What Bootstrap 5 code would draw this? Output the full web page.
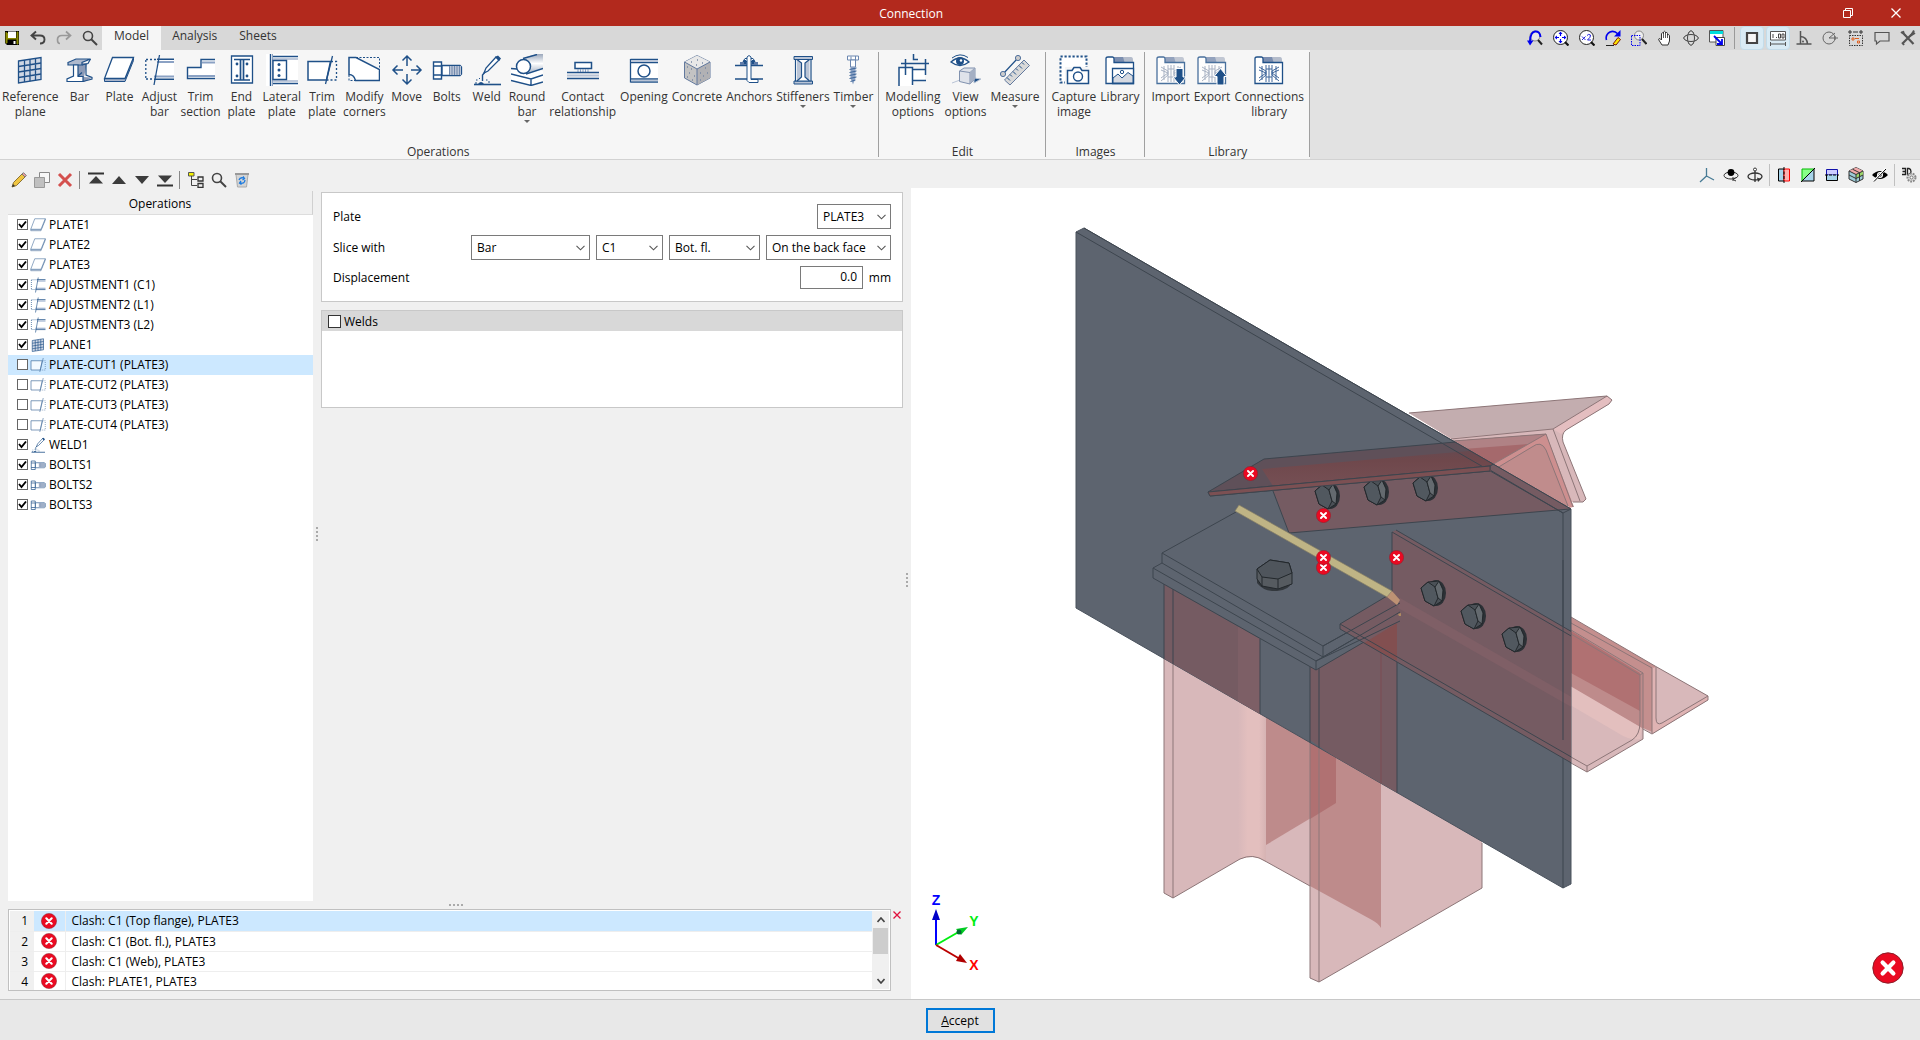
<!DOCTYPE html>
<html lang="en">
<head>
<meta charset="utf-8">
<meta name="viewport" content="width=device-width, initial-scale=1">
<title>Connection</title>
<link rel="stylesheet" href="https://cdn.jsdelivr.net/npm/bootstrap@5.3.0/dist/css/bootstrap.min.css">
<style>
body{font:12px/15px "Open Sans","Noto Sans",sans-serif;color:#000;background:#f0f0f0;height:100vh;min-height:700px;overflow:hidden}
button,input,select{font:inherit;color:inherit}
svg{display:block;flex:none}
.ico{width:16px;height:16px}
.plain-btn{border:0;background:none;padding:0;display:flex;align-items:center;justify-content:center}
.titlebar{background:#b2291d;color:#fff;height:26px;display:grid;grid-template-columns:911fr 1009fr}
.win-btn{width:48px}
.win-title{margin-right:-32px}
.tabs-row{background:#d8d8d8;height:24px}
.quick{width:102px;padding-left:2px;gap:6px}
.quick .plain-btn{width:20px}
.ribbon-tab{border:0;background:none;color:#333;padding:0 11px 5px;height:24px;line-height:19px}
.ribbon-tab.active{background:#f6f6f6;padding:0 12px 5px}
.top-tools{gap:2px}
.top-tools .plain-btn{width:24px;height:24px;border-radius:4px}
.top-tools .on{background:#d9ebf5;border:1px solid #c3dcea}
.top-tools .sep{width:1px;height:22px;background:#999;margin:0 3px}
.ribbon{background:#e2e2e2;height:110px;border-bottom:1px solid #d2d2d2}
.rgroup{background:#f6f6f6;position:relative;height:109px;padding:4px 4px 0;color:#333}
.rgroup::after{content:"";position:absolute;right:0;top:2px;bottom:2px;width:1px;background:#a0a0a0}
.rgroup.first{padding:4px 4px 0 1px}
.rbtn{border:0;background:none;color:#333;padding:0 2px;min-width:40px;text-align:center;display:flex;flex-direction:column;align-items:center;justify-content:flex-start}
.rbtn.snug{padding:0 1px}
.rbtn svg{width:32px;height:32px;margin-bottom:3px}
.caret{width:0;height:0;border:3px solid transparent;border-top-color:#666;border-bottom:0;margin-top:1px}
.rlabel{text-align:center;line-height:14px}
.work{flex:1 1 0;min-height:0;display:grid;grid-template-columns:minmax(0,903fr) 8px minmax(0,1009fr)}
.side{padding:0 0 8px 8px;min-height:0}
.side-tools{height:31px;padding:8px 0 0 1px;gap:3px}
.side-tools .plain-btn{width:20px;height:24px}
.side-tools .sep{width:1px;height:18px;background:#888;margin:0 3px 0 1px}
.upper{min-height:0;flex:1 1 0;display:grid;grid-template-columns:305px 8px minmax(0,1fr)}
.tree{background:#fff}
.tree-head{height:24px;background:#f0f0f0;line-height:25px;text-align:center;border-bottom:1px solid #ddd;border-right:1px solid #d0d0d0}
.trow{height:20px;padding:0 0 1px 9px;display:flex;align-items:center;margin:0;cursor:default}
.trow.sel{background:#cce8ff}
.trow svg{margin:0 3px 0 2px}
.tick{appearance:none;width:11px;height:11px;border:1px solid #666;background:#fff;margin:0;flex:none}
.tick:checked{background:#fff url("data:image/svg+xml,%3Csvg xmlns='http://www.w3.org/2000/svg' viewBox='0 0 9 9'%3E%3Cpath d='M1 4l2.5 3L8 1.5' fill='none' stroke='%23000' stroke-width='1.9'/%3E%3C/svg%3E") center/9px no-repeat}
.tick.big{width:13px;height:13px;border-color:#333}
.box{background:#fff;border:1px solid #c8c8c8}
.form-col{gap:8px;padding-top:1px}
.form-box{padding:11px;height:110px}
.welds-box{height:98px}
.fields{display:flex;flex-direction:column;gap:6px}
.combo{appearance:none;height:25px;border:1px solid #7a7a7a;border-radius:0;padding:0 20px 0 5px;background:#fff url("data:image/svg+xml,%3Csvg xmlns='http://www.w3.org/2000/svg' viewBox='0 0 9 6'%3E%3Cpath d='M.5.8l4 4 4-4' fill='none' stroke='%23555' stroke-width='1.1'/%3E%3C/svg%3E") right 4px center/9px 6px no-repeat}
.w-plate{width:74px}.w-kind{width:119px}.w-name{width:67px}.w-part{width:91px}.w-face{width:125px}
.num{width:63px;height:23px;border:1px solid #7a7a7a;text-align:right;padding:0 5px 2px}
.unit{width:28px;text-align:right}
.welds-head{background:#d8d8d8;height:20px;padding-left:6px;gap:3px}
.grip{display:flex;align-items:center;justify-content:center;gap:2px}
.grip i{width:2px;height:2px;background:#aaa}
.grip.tall{padding-bottom:24px}
.grip.flat{height:8px}
.msgs{height:82px;border:1px solid #c0c0c0;background:#fff;width:calc(100% - 12px);padding:1px}
.msgs table{width:100%;margin:0}
.msgs td{height:20px;padding:0;line-height:19px;border-bottom:1px solid #eee}
.msgs .n{width:24px;background:#f0f0f0;text-align:right;padding-right:6px}
.msgs .ic{width:31px;border-right:1px solid #eee;padding-left:7px}
.msgs .tx{padding-left:6px}
.msgs .sel .ic,.msgs .sel .tx{background:#cce8ff}
.close-list{padding:2px 0 0 2px}
.scroller{width:17px;background:#f0f0f0}
.scroller .plain-btn{width:17px;height:17px}
.thumb{height:26px;width:15px;background:#cdcdcd;margin:0 1px}
.view-tools{height:28px;gap:4px;padding:2px 1px 0 0}
.view-tools .plain-btn{width:20px;height:24px}
.view-tools .sep{width:1px;height:22px;background:#c0c0c0}
.scene{background:#fff;flex:1 1 0;min-height:0}
.scene svg{width:100%;height:100%}
.ln{fill:none;stroke:#3d454e;stroke-width:1;stroke-linejoin:round}
.lo{fill:none;stroke:#8d7678;stroke-width:1;stroke-linejoin:round}
.axis{font:bold 14px "Liberation Sans",sans-serif}
.bottom{height:41px;background:#e8e8e8;border-top:1px solid #c8c8c8;display:flex;justify-content:center;align-items:center}
.accept{width:69px;height:25px;background:#e1e1e1;border:2px solid #0078d7;padding:0;line-height:19px}
</style>
<script src="https://cdn.jsdelivr.net/npm/bootstrap@5.3.0/dist/js/bootstrap.bundle.min.js"></script>
</head>
<body class="d-flex flex-column">

<svg width="0" height="0" class="position-absolute" aria-hidden="true">
<defs>
<linearGradient id="tube" x1="0" y1="0" x2="0" y2="1"><stop offset="0" stop-color="#9aa7bb"/><stop offset=".5" stop-color="#fff"/><stop offset="1" stop-color="#a9b4c6"/></linearGradient>
<!-- Ribbon icons -->
<symbol id="i-plane" viewBox="0 0 32 32"><path d="M4.500 7L27 3.500V25.500L4.500 29Z" fill="#cfd7e4" stroke="#1f5088" stroke-width="1.300"/><path d="M10.500 6V28M16 5.200V27.200M21.500 4.400V26.400M4.500 12.500L27 9M4.500 18L27 14.500M4.500 23.500L27 20" fill="none" stroke="#1f5088" stroke-width="1.300"/></symbol>
<symbol id="i-bar" viewBox="0 0 32 32"><path d="M15 9H24L21 23L29 23.500 21 28 14 24Z" fill="#8d9bb7"/><path d="M5 8.500L13 5H27.500L19 8.500V11H5Z" fill="#aeb9cd" stroke="#1f5088" stroke-width="1.200"/><path d="M10.500 11H15V22.500H20V27.500H4V25L10.500 22Z" fill="#fff" stroke="#1f5088" stroke-width="1.200"/><path d="M19 11L25 9.500 27.500 5M23 10V21L29 23.500V25L20 27.500M15 22L19 18.500" fill="none" stroke="#1f5088" stroke-width="1.200"/></symbol>
<symbol id="i-plate" viewBox="0 0 32 32"><path d="M1.500 24.500V27.500H22L30.500 6.500V3.500L22 24.500Z" fill="#aab6cc" stroke="#1f5088"/><path d="M9.500 3.500H30.500L22 24.500H1.500Z" fill="#fff" stroke="#1f5088" stroke-width="1.300"/></symbol>
<symbol id="i-adjust" viewBox="0 0 32 32"><path d="M15 6H31V24.500H11Z" fill="#fff"/><path d="M14 5.200H31M11 25.200H31" stroke="#1f5088" stroke-width="1.500"/><path d="M14 8H31M11 22.500H31" stroke="#8ba2c4" stroke-width="2"/><path d="M3 5.500H13M2.800 6V25M3 25H10" fill="none" stroke="#1f5088" stroke-width="1.300" stroke-dasharray="2 2"/><path d="M16.500 1L11 31" stroke="#1f5088" stroke-width="1.300"/></symbol>
<symbol id="i-trimsec" viewBox="0 0 32 32"><path d="M16 5H31V25H3V13H16Z" fill="#fff"/><path d="M31 5.500H17V13.500H3.500V24.500H31" fill="none" stroke="#1f5088" stroke-width="1.400"/><path d="M18 8.500H31M4 22H31" stroke="#8ba2c4" stroke-width="2"/></symbol>
<symbol id="i-end" viewBox="0 0 32 32"><path d="M5.500 2H26.500V29H5.500Z" fill="#fff" stroke="#1f5088" stroke-width="1.300"/><path d="M8 5.500H24M8 26H24M14.500 6V26M17.500 6V26" stroke="#1f5088" stroke-width="1.700" fill="none"/><g fill="#1f5088"><circle cx="11" cy="10" r="1.400"/><circle cx="21" cy="10" r="1.400"/><circle cx="11" cy="22" r="1.400"/><circle cx="21" cy="22" r="1.400"/></g></symbol>
<symbol id="i-lateral" viewBox="0 0 32 32"><path d="M0 0H32V32H0Z" fill="#fff"/><path d="M4.500 0V32" stroke="#1f5088" stroke-width="1.400"/><path d="M6.500 0V32" stroke="#8ba2c4"/><path d="M7 2.500H32M7 29.500H32" stroke="#1f5088" stroke-width="1.500"/><path d="M7 5H32M7 27H32" stroke="#a9b8d0" stroke-width="1.500"/><path d="M7 6.500H20.500V25.500H7Z" fill="#fff" stroke="#1f5088" stroke-width="1.400"/><g fill="#1f5088"><circle cx="13" cy="10.500" r="1.500"/><circle cx="13" cy="16" r="1.500"/><circle cx="13" cy="21.500" r="1.500"/></g></symbol>
<symbol id="i-trimpl" viewBox="0 0 32 32"><path d="M2 7.500H24.500L20.500 26H2Z" fill="#fff" stroke="#1f5088" stroke-width="1.500"/><path d="M25 7.500H30.500V26H20" fill="none" stroke="#1f5088" stroke-width="1.300" stroke-dasharray="2 2"/><path d="M26.500 2L19.500 30" stroke="#1f5088" stroke-width="1.300"/></symbol>
<symbol id="i-modify" viewBox="0 0 32 32"><path d="M1 3.500H8L31.500 15.500V26.500H7.500C6.500 22.500 4 20.500 1 20.500Z" fill="#fff" stroke="#1f5088" stroke-width="1.500"/><path d="M8 3.500H31.500V15M1 21V26.500H7" fill="none" stroke="#1f5088" stroke-dasharray="2 1.500"/></symbol>
<symbol id="i-move" viewBox="0 0 32 32"><path d="M16 2V12M16 20V30M2 16H12M20 16H30M11.500 6.500L16 2l4.500 4.500M11.500 25.500L16 30l4.500-4.500M6.500 11.500L2 16l4.500 4.500M25.500 11.500L30 16l-4.500 4.500" fill="none" stroke="#1f5088" stroke-width="1.500"/></symbol>
<symbol id="i-bolt" viewBox="0 0 32 32"><path d="M11 11.500H29L30.500 13V20L29 21.500H11Z" fill="#fff" stroke="#1f5088" stroke-width="1.300"/><path d="M18 12H30V21H18Z" fill="#b9c4d6"/><path d="M18.500 12V21M21 12V21M23.500 12V21M26 12V21M28.500 12V21" stroke="#7088ac"/><path d="M2.500 8H10.500V25H2.500ZM2.500 12H10.500M2.500 21H10.500" fill="#fff" stroke="#1f5088" stroke-width="1.400"/></symbol>
<symbol id="i-weld" viewBox="0 0 32 32"><path d="M3 30.500H30" stroke="#1f5088" stroke-width="1.600"/><path d="M25 3L28 6 17 17 13 19 15 14Z" fill="#fff" stroke="#1f5088" stroke-width="1.300"/><path d="M24 3L27 1.500 30 4.500 28 7Z" fill="#1f5088"/><path d="M14 18L11.500 21V27" stroke="#1f5088" stroke-width="1.400" fill="none"/><path d="M7 30Q10 26 13 30Z" fill="#1f5088"/><path d="M5 26h1.500M8 24.500h1M15 26h1.500M4 29h2M17 28h2" stroke="#1f5088"/></symbol>
<symbol id="i-round" viewBox="0 0 32 32"><path d="M0 16L16 13 32 17V28L20 31 0 27Z" fill="#fff"/><path d="M12 4L26 0H32V14L15 19Z" fill="url(#tube)"/><path d="M12 4.500L26 .5M15 20L32 14.500M0 14.500L6 15M0 20L20 25 32 21M0 26.500L20 31.500 32 28M20 25V31" fill="none" stroke="#1f5088" stroke-width="1.400"/><circle cx="12.500" cy="12.500" r="7" fill="#fff" stroke="#1f5088" stroke-width="1.500"/></symbol>
<symbol id="i-contact" viewBox="0 0 32 32"><path d="M8 8.500H24.500V14.500H8Z" fill="#fff" stroke="#1f5088" stroke-width="1.500"/><path d="M11 15V18M13.500 15V18M16 15V18M18.500 15V18M21 15V18" stroke="#8ba2c4"/><path d="M0 18.500H32M0 24.500H32" stroke="#1f5088" stroke-width="1.300"/><path d="M0 21.500H32" stroke="#b9c4d6" stroke-width="2"/></symbol>
<symbol id="i-opening" viewBox="0 0 32 32"><path d="M2.500 4.500H30V28.500H2.500Z" fill="#fff"/><path d="M2.500 5.500H30M2.500 28H30M2.500 5V28.500M2.500 8.500H30M2.500 25H30" fill="none" stroke="#1f5088" stroke-width="1.300"/><path d="M3 7H30M3 26.500H30" stroke="#b9c4d6" stroke-width="1.600"/><circle cx="16" cy="17" r="6" fill="#fff" stroke="#1f5088" stroke-width="1.500"/></symbol>
<symbol id="i-concrete" viewBox="0 0 32 32"><path d="M16 1.500L29 8V24L16 31 3.500 24V8Z" fill="#c3c3c3" stroke="#62799e"/><path d="M16 1.500L29 8 16 15 3.500 8Z" fill="#e8e8e8"/><path d="M16 15L29 8V24L16 31Z" fill="#b1b1b4"/><path d="M16 15V31M3.500 8L16 15 29 8" fill="none" stroke="#62799e"/><path d="M6 13h1M10 15h1M8 19h1M13 22h1M6 23h1M11 26h1M19 19h1M24 14h1M22 22h1M26 19h1M19 26h1M10 8h1M16 6h1M21 9h1M15 11h1" stroke="#7788a4" stroke-width="1.300"/></symbol>
<symbol id="i-anchors" viewBox="0 0 32 32"><path d="M2 11.500H30M2 25H30" stroke="#1f5088" stroke-width="1.300"/><path d="M7 8H25V11H7Z" fill="#5e7ba8"/><path d="M10 7.500L12 4.500H20L22 7.500Z" fill="#fff" stroke="#1f5088"/><path d="M14 3V26.500L16 28.500H25V25.500H18V3L16 1.500Z" fill="#fff" stroke="#1f5088"/><path d="M12 6V10M20 6V10" stroke="#1f5088" stroke-width="2"/></symbol>
<symbol id="i-stiff" viewBox="0 0 32 32"><path d="M7 2.500H25.500V5.500H7ZM7 27H25.500V30H7Z" fill="#b9c4d6" stroke="#1f5088"/><path d="M8.500 5.500H24V27H8.500Z" fill="#fff" stroke="#1f5088" stroke-width="1.200"/><path d="M10 5.500L14.500 9V23L10 27M22.500 5.500L18 9V23L22.500 27" fill="#b9c4d6" stroke="#1f5088" stroke-width="1.200"/></symbol>
<symbol id="i-timber" viewBox="0 0 32 32"><path d="M10.500 2H21.500V6H10.500ZM14 6V2.500M18.500 2V6" fill="#fff" stroke="#6b87b0"/><path d="M13.500 6H18.500V13H13.500Z" fill="#fff" stroke="#6b87b0"/><path d="M13.500 13H18.500V24L16 30.500 13.500 24Z" fill="#8ba2c4"/><path d="M12.500 15.500L19.500 14M12.500 18.500L19.500 17M12.500 21.500L19.500 20M12.500 24.500L19.500 23M13.500 27.500L18.500 26" stroke="#3f679b"/></symbol>
<symbol id="i-model" viewBox="0 0 32 32"><path d="M2 13H16V32H2Z" fill="#fff"/><path d="M16 15H28V26H16Z" fill="#fff"/><path d="M2 32V13.500H15.500V31M16 15.500H28M16 26.500H29" fill="none" stroke="#1f5088" stroke-width="1.500"/><path d="M4 9.500H32M8.500 5V21M28.500 5V21" stroke="#1f5088" stroke-width="1.500"/><path d="M16.500 0V5.500H21" fill="none" stroke="#1f5088" stroke-width="1.500"/></symbol>
<symbol id="i-view" viewBox="0 0 32 32"><path d="M2 8Q11 0 20 8Q11 15 2 8Z" fill="#fff" stroke="#1f5088" stroke-width="1.300"/><path d="M3 4Q11-2 19 3.500" fill="none" stroke="#1f5088"/><circle cx="11" cy="7" r="4" fill="#1f5088"/><circle cx="12" cy="6.500" r="1.200" fill="#fff"/><path d="M3 29L11 26M25 24L32 25 25 29Z" fill="#1f5088" stroke="#b9c4d6"/><path d="M10.500 17L15 14H26V25L21 30 10.500 27.500Z" fill="#dfe3ea" stroke="#8091ae"/><path d="M10.500 17L21 18.500 26 14M21 18.500V30" fill="none" stroke="#8091ae"/><path d="M21 18.500L26 14V25L21 30Z" fill="#a5b0c4"/></symbol>
<symbol id="i-measure" viewBox="0 0 32 32"><path d="M4 20L18 5" stroke="#1f5088" stroke-width="1.200"/><circle cx="4" cy="20" r="2.600" fill="#ccc" stroke="#51719d"/><circle cx="19" cy="4" r="2.600" fill="#ccc" stroke="#51719d"/><path d="M5.500 26L25 6 30.500 11.500 11 31Z" fill="#d9d9d9" stroke="#62799e"/><path d="M8 23.500l3 3M11 20.500l2 2M14 17.500l3 3M17 14.500l2 2M20 11.500l3 3M23 8.500l2 2" stroke="#1f5088"/></symbol>
<symbol id="i-capture" viewBox="0 0 32 32"><path d="M2.500 2.500H28.500V28.500H2.500Z" fill="#fff" stroke="#1f5088" stroke-width="2" stroke-dasharray="2.200 1.800"/><path d="M7 13H32V32H7Z" fill="#f6f6f6"/><path d="M10 16.500H14L16 13.500H22L24 16.500H30.500V29.500H9.500V16.500Z" fill="#fff" stroke="#1f5088" stroke-width="1.500"/><circle cx="20" cy="22.500" r="4.500" fill="#fff" stroke="#1f5088" stroke-width="1.400"/></symbol>
<symbol id="i-folder" viewBox="0 0 32 32"><path d="M19 3H27Q29 3 29 6V9H19Z" fill="#b4bccb"/><path d="M10 3H19L20.500 8H10Z" fill="#7b8eb0"/><path d="M2 29.500V4.500Q2 3 4 3H8.500Q10 3 10 5V8.500H29.500V29.500Z" fill="#fff" stroke="#1f5088" stroke-width="1.300"/></symbol>
<symbol id="i-library" viewBox="0 0 32 32"><use href="#i-folder"/><path d="M8.500 14.500H29.500V29.500H8.500Z" fill="#fff" stroke="#1f5088" stroke-width="1.300"/><path d="M9 24L14 20 18 24 24 18.500 29 22V29H9Z" fill="#d6dae2" stroke="#1f5088"/><circle cx="18" cy="18" r="1.700" fill="none" stroke="#1f5088"/></symbol>
<symbol id="i-truss" viewBox="0 0 32 32"><path d="M6 13L13 17V21L6 27M26 13L19 17V21L26 27M6 16L13 19 6 24M26 16L19 19 26 24M13 11V28M19 11V28M16 11V28M9 12V26M23 12V26M13 15H19M13 23H19" fill="none" stroke="currentColor"/></symbol>
<symbol id="i-import" viewBox="0 0 32 32"><use href="#i-folder" opacity=".8"/><use href="#i-truss" color="#a9b3c4"/><path d="M21 14.500H28V23H31L24.500 31 18 23H21Z" fill="#1f5088" stroke="#fff"/></symbol>
<symbol id="i-export" viewBox="0 0 32 32"><use href="#i-folder" opacity=".8"/><use href="#i-truss" color="#a9b3c4"/><path d="M21 31H28V22.500H31L24.500 14.500 18 22.500H21Z" fill="#1f5088" stroke="#fff"/></symbol>
<symbol id="i-conn" viewBox="0 0 32 32"><use href="#i-folder"/><use href="#i-truss" color="#3f679b"/></symbol>
<!-- Small icons -->
<symbol id="s-save" viewBox="0 0 16 16"><path d="M1 1H15V15H3L1 13Z" fill="#000"/><path d="M2 2V13H3V9H13V2H14V14H13V9" stroke="#8a8a00" fill="#8a8a00"/><path d="M4 1.500H12V8H4Z" fill="#fff"/><path d="M4 10H12V15H4Z" fill="#000"/><path d="M9.500 11H11.500V14H9.500Z" fill="#fff"/></symbol>
<symbol id="s-undo" viewBox="0 0 16 16"><path d="M6 1.500L1.500 5.500 6 9.500M2 5.500H10Q14.500 5.500 14.500 9.500 14.500 13.500 10 13.500" fill="none" stroke="#444" stroke-width="1.900"/></symbol>
<symbol id="s-redo" viewBox="0 0 16 16"><path d="M10 1.500L14.500 5.500 10 9.500M14 5.500H6Q1.500 5.500 1.500 9.500 1.500 13.500 4 13.500" fill="none" stroke="#999" stroke-width="1.700"/></symbol>
<symbol id="s-find" viewBox="0 0 16 16"><circle cx="6" cy="6" r="4.500" fill="none" stroke="#444" stroke-width="1.600"/><path d="M9 9L15 15" stroke="#444" stroke-width="1.900"/></symbol>
<symbol id="s-lens" viewBox="0 0 16 16"><circle cx="7.500" cy="7.500" r="7" fill="#fff" stroke="#222"/><path d="M12 12L15.500 15.500" stroke="#111" stroke-width="2.200"/></symbol>
<symbol id="s-prev" viewBox="0 0 16 16"><circle cx="8" cy="6" r="5" fill="#e8e8e8" stroke="#888"/><path d="M11 10L15 14.500" stroke="#222" stroke-width="2"/><path d="M13.500 7Q13 1 8 1.500 3.500 2 3 11" fill="none" stroke="#00e" stroke-width="2"/><path d="M0 10.500H6.500L3 15.500Z" fill="#00e"/></symbol>
<symbol id="s-all" viewBox="0 0 16 16"><use href="#s-lens"/><path d="M7.500 3V6M7.500 9V12M3 7.500H6M9 7.500H12" stroke="#00e" stroke-width="1.200"/><path d="M5.500 4L7.500 1.500 9.500 4ZM5.500 11L7.500 13.500 9.500 11ZM4 5.500L1.500 7.500 4 9.500ZM11 5.500L13.500 7.500 11 9.500Z" fill="#00e"/></symbol>
<symbol id="s-x2" viewBox="0 0 16 16"><use href="#s-lens"/><path d="M3 6.500l3.500 3.500M6.500 6.500l-3.500 3.500M8 5.500Q9.500 3.500 11.500 5 12 7 8.500 10H12" fill="none" stroke="#22d"/></symbol>
<symbol id="s-redraw" viewBox="0 0 16 16"><path d="M1.500 10Q0 5 5 2 9 0 13 4" fill="none" stroke="#00e" stroke-width="1.600"/><path d="M15.500 0V6.500H9Z" fill="#00e"/><path d="M1 15.500H9" stroke="#222"/><path d="M8 14L13 7.500 15.500 9.500 11 15Z" fill="#ffe600" stroke="#7a1a00"/></symbol>
<symbol id="s-zwin" viewBox="0 0 16 16"><circle cx="8" cy="5.500" r="4.500" fill="#eee" stroke="#888"/><path d="M11 9L15.500 14" stroke="#222" stroke-width="2"/><path d="M.5 5.500H9V15.500H.5Z" fill="none" stroke="#00e" stroke-dasharray="1.500 1"/></symbol>
<symbol id="s-hand" viewBox="0 0 16 16"><path d="M5 15L1.500 9.500Q1.500 8 3.500 9L4.500 10V3.500Q5.500 2 6.500 3.500V2Q7.500.5 8.500 2V3Q10 1.500 10.500 3.500V5Q12 4 12.500 5.500V11L11 15Z" fill="#fff" stroke="#333"/><path d="M6.500 3V8M8.500 3V8M10.500 4V8" stroke="#333" stroke-width=".8"/></symbol>
<symbol id="s-orbit" viewBox="0 0 16 16"><ellipse cx="8" cy="8" rx="7" ry="3.500" fill="none" stroke="#444"/><ellipse cx="8" cy="8" rx="3.500" ry="7" fill="none" stroke="#444"/><path d="M5.500 3L8 .5 10.500 3M5.500 13L8 15.500 10.500 13M3 5.500L.5 8 3 10.500M13 5.500L15.500 8 13 10.500" fill="#ddd" stroke="#444"/></symbol>
<symbol id="s-win" viewBox="0 0 16 16"><path d="M.5.500H14V12H.5Z" fill="#fff" stroke="#555"/><path d="M1 1H14V4H1Z" fill="#0dd"/><path d="M7 7.500H15.500V15.500H7Z" fill="#fff" stroke="#444"/><path d="M5 6L12 13M13 9V14H8" stroke="#00e" stroke-width="1.800" fill="none"/></symbol>
<symbol id="s-square" viewBox="0 0 16 16"><path d="M3 3H13V13H3Z" fill="#f6f6f6" stroke="#444" stroke-width="2.200"/></symbol>
<symbol id="s-dim" viewBox="0 0 16 16"><path d="M.5 1.500H15.500V10H.5Z" fill="#fff" stroke="#555"/><path d="M3 4V8M6 7.500h1M8.500 4h2v4h-2zM12 4h2v4h-2z" fill="none" stroke="#333" stroke-width=".9"/><path d="M.5 12V16M15.500 12V16M.5 14H15.500" stroke="#555"/></symbol>
<symbol id="s-angle" viewBox="0 0 16 16"><path d="M4.500 1V14M.5 14H15.500M4.500 6.500Q11 7 11.500 14" fill="none" stroke="#555" stroke-width="1.500"/><circle cx="7" cy="11.500" r="1" fill="#555"/></symbol>
<symbol id="s-circ" viewBox="0 0 16 16"><circle cx="7" cy="8" r="6" fill="none" stroke="#666"/><path d="M7 8H16M7 8L13 3M13 6V10" stroke="#666" fill="none"/></symbol>
<symbol id="s-snap" viewBox="0 0 16 16"><path d="M1 1h2v2H1zM5 2h5M12 1h2v2h-2z" fill="none" stroke="#333"/><path d="M1.500 5.500H14.500V15.500H1.500Z" fill="none" stroke="#333" stroke-dasharray="1.500 1"/><path d="M4 8h2v2H4zM7 8.500h4M9.500 11h2v2h-2z" fill="none" stroke="#e06020"/></symbol>
<symbol id="s-chat" viewBox="0 0 16 16"><path d="M1 2.500H15V11H6L2.500 14V11H1Z" fill="none" stroke="#555" stroke-width="1.200"/></symbol>
<symbol id="s-tools" viewBox="0 0 16 16"><path d="M3 13L13 3M4 4L13.500 14" stroke="#555" stroke-width="2.200"/><path d="M1 2L4 4 3 1M15 3L11.500 5 14 .5M2 12.500L4 15" stroke="#555" stroke-width="2" fill="none"/></symbol>
<symbol id="s-pen" viewBox="0 0 16 16"><path d="M1 15L2.500 10.500 11 2 14 5 5.500 13.500Z" fill="#f0c541" stroke="#8c7335"/><path d="M11 2L12.500.7 15.300 3.500 14 5Z" fill="#f4a0a0" stroke="#777"/><path d="M1 15L2 12 4 14Z" fill="#333"/></symbol>
<symbol id="s-copy" viewBox="0 0 16 16"><path d="M5.500.5H15.500V10.500H5.500Z" fill="#f7f7f7" stroke="#888"/><path d="M.5 5.500H10.500V15.500H.5Z" fill="#c0c0c0" stroke="#999"/></symbol>
<symbol id="s-del" viewBox="0 0 16 16"><path d="M2 2L14 14M14 2L2 14" stroke="#d4504e" stroke-width="3"/></symbol>
<symbol id="s-top" viewBox="0 0 16 16"><path d="M0 1.500H16" stroke="#333" stroke-width="2"/><path d="M1 11.500L8 4 15 11.500Z" fill="#3c3c3c"/></symbol>
<symbol id="s-up" viewBox="0 0 16 16"><path d="M1 12L8 4 15 12Z" fill="#3c3c3c"/></symbol>
<symbol id="s-down" viewBox="0 0 16 16"><path d="M1 4L8 12 15 4Z" fill="#3c3c3c"/></symbol>
<symbol id="s-bot" viewBox="0 0 16 16"><path d="M0 13.500H16" stroke="#333" stroke-width="2"/><path d="M1 3.500L8 11 15 3.500Z" fill="#3c3c3c"/></symbol>
<symbol id="s-tree" viewBox="0 0 16 16"><path d="M.5.500H6V4H.5Z" fill="#f3f000" stroke="#555"/><path d="M3.500 4V13.500H9M3.500 7.500H9" fill="none" stroke="#444"/><path d="M10 5H15V9H10ZM10 11.500H15V15.500H10Z" fill="none" stroke="#333" stroke-width="1.300"/></symbol>
<symbol id="s-bin" viewBox="0 0 16 16"><path d="M2 2.500H14L12.500 15H3.500Z" fill="#d4d4d4" stroke="#aaa"/><path d="M1 1H15V3H1Z" fill="#999"/><path d="M5 8Q6 5 9.500 6M11 8Q10.500 12 6.500 11M9 4.500L10.500 6.500 8.500 8M7 9L5.500 11 7.500 12.500" fill="none" stroke="#1a7ae0" stroke-width="1.300"/></symbol>
<symbol id="s-err" viewBox="0 0 16 16"><circle cx="8" cy="8" r="7.600" fill="#ea0a22" stroke="#8c1f2a" stroke-width=".5"/><path d="M5.300 5.300L10.700 10.700M10.700 5.300L5.300 10.700" stroke="#fff" stroke-width="2.100" stroke-linecap="round"/></symbol>
<symbol id="s-axes" viewBox="0 0 16 16"><path d="M7.500 1V9M7.500 9L15 13M7.500 9L1 15" fill="none" stroke="#477b95" stroke-width="1.300"/></symbol>
<symbol id="s-rotc" viewBox="0 0 16 16"><ellipse cx="8" cy="8.500" rx="7" ry="3.500" fill="none" stroke="#333"/><circle cx="8" cy="5.500" r="3.400" fill="#000"/><path d="M10 14V10M12.500 10.500L10 12.500 13 14" stroke="#333" fill="none"/></symbol>
<symbol id="s-rota" viewBox="0 0 16 16"><ellipse cx="8" cy="9.500" rx="7" ry="3.500" fill="none" stroke="#333" stroke-width="1.300"/><path d="M8 3V15" stroke="#333" stroke-width="1.300"/><circle cx="8" cy="2.500" r="1.500" fill="#fff" stroke="#333"/><path d="M10 10.500L14 12 11 15Z" fill="#333"/></symbol>
<symbol id="s-sec1" viewBox="0 0 16 16"><path d="M2.500 2H8V14H2.500Z" fill="#a8d4ea" stroke="#000"/><path d="M8 2H13.500V14H8Z" fill="#ffb0b0" stroke="red"/><path d="M8 0V16" stroke="#000" stroke-dasharray="3 1.500"/></symbol>
<symbol id="s-sec2" viewBox="0 0 16 16"><path d="M2 2H14L2 14Z" fill="#8f8" stroke="#0b0"/><path d="M14 2V14H2Z" fill="#a8d4ea" stroke="#000"/><path d="M1 15L15 1" stroke="#000" stroke-dasharray="3 1.500"/></symbol>
<symbol id="s-sec3" viewBox="0 0 16 16"><path d="M2.500 2.500H13.500V8H2.500Z" fill="#ccf" stroke="#11a"/><path d="M2.500 8V13.500H13.500V8" fill="#a8d4ea" stroke="#000"/><path d="M1 8H15" stroke="#000" stroke-dasharray="3 1"/></symbol>
<symbol id="s-cube" viewBox="0 0 16 16"><path d="M8 .5L15 4V12L8 15.500 1 12V4Z" fill="#9ccbd8" stroke="#333"/><path d="M8 .5L15 4 8 7.500 1 4Z" fill="#f0a9a9"/><path d="M8 7.500L15 4V8L8 11.500Z" fill="#9bd46a"/><path d="M1 4L8 7.500 15 4M8 7.500V15.500M1 8L8 11.500 15 8M4.500 2.200L11.500 5.700V14" fill="none" stroke="#333"/></symbol>
<symbol id="s-hide" viewBox="0 0 16 16"><path d="M0 8Q8 0 16 8 8 16 0 8Z" fill="#000"/><circle cx="8" cy="8" r="3" fill="#fff"/><circle cx="8" cy="8" r="1.700" fill="#000"/><path d="M2 14L14 1.500" stroke="#fff" stroke-width="2.400"/><path d="M2 14.500L14 2" stroke="#000"/></symbol>
<symbol id="s-3d" viewBox="0 0 16 16"><path d="M1 1.500H4.500V7.500H1M1.500 4.500H4.500M6.500 1.500V7.500H8Q10 7 10 4.500T8 1.500Z" fill="none" stroke="#222" stroke-width="1.300"/><circle cx="10.500" cy="10.500" r="4" fill="#ddd" stroke="#888" stroke-width="2" stroke-dasharray="1.800 1"/><circle cx="10.500" cy="10.500" r="1.500" fill="#fff" stroke="#777"/></symbol>
<symbol id="sideBolt" viewBox="-14 -14 28 28"><ellipse cx="3" cy="0" rx="10" ry="13" fill="#2c3136"/><path d="M-12-5L-5-11 6-12 10-3 9 8 1 13-8 8Z" fill="#4b5157" stroke="#23282c"/><path d="M-12-5L-5-11 2-6 5 5 1 13-8 8Z" fill="#51585f" stroke="#23282c"/><path d="M2-6L6-12 10-3 9 8 5 5Z" fill="#646a6f" stroke="#23282c"/></symbol>
</defs>
</svg>

<header class="titlebar">
  <div class="d-flex align-items-center justify-content-end"><span class="win-title">Connection</span></div>
  <div class="d-flex justify-content-end">
    <button class="plain-btn win-btn" type="button" aria-label="Restore"><svg width="10" height="10" viewBox="0 0 10 10"><path d="M.5 2.500H7.500V9.500H.5ZM2.500 2V.5H9.500V7.500H8" fill="none" stroke="#fff"/></svg></button>
    <button class="plain-btn win-btn" type="button" aria-label="Close"><svg width="10" height="10" viewBox="0 0 10 10"><path d="M.5.500L9.500 9.500M9.500.500L.5 9.500" stroke="#fff" stroke-width="1.300"/></svg></button>
  </div>
</header>

<nav class="tabs-row d-flex" aria-label="Ribbon tabs">
  <div class="quick d-flex">
    <button class="plain-btn" type="button" aria-label="Save"><svg class="ico"><use href="#s-save"/></svg></button>
    <button class="plain-btn" type="button" aria-label="Undo"><svg class="ico"><use href="#s-undo"/></svg></button>
    <button class="plain-btn" type="button" aria-label="Redo"><svg class="ico"><use href="#s-redo"/></svg></button>
    <button class="plain-btn" type="button" aria-label="Search"><svg class="ico"><use href="#s-find"/></svg></button>
  </div>
  <button class="ribbon-tab active" type="button">Model</button>
  <button class="ribbon-tab" type="button">Analysis</button>
  <button class="ribbon-tab" type="button">Sheets</button>
  <div class="top-tools d-flex align-items-center ms-auto">
    <button class="plain-btn" type="button" aria-label="Previous view"><svg class="ico"><use href="#s-prev"/></svg></button>
    <button class="plain-btn" type="button" aria-label="Zoom all"><svg class="ico"><use href="#s-all"/></svg></button>
    <button class="plain-btn" type="button" aria-label="Zoom x2"><svg class="ico"><use href="#s-x2"/></svg></button>
    <button class="plain-btn" type="button" aria-label="Redraw"><svg class="ico"><use href="#s-redraw"/></svg></button>
    <button class="plain-btn" type="button" aria-label="Zoom window"><svg class="ico"><use href="#s-zwin"/></svg></button>
    <button class="plain-btn" type="button" aria-label="Pan"><svg class="ico"><use href="#s-hand"/></svg></button>
    <button class="plain-btn" type="button" aria-label="Orbit"><svg class="ico"><use href="#s-orbit"/></svg></button>
    <button class="plain-btn" type="button" aria-label="Windows"><svg class="ico"><use href="#s-win"/></svg></button>
    <span class="sep"></span>
    <button class="plain-btn on" type="button" aria-label="Frame"><svg class="ico"><use href="#s-square"/></svg></button>
    <button class="plain-btn on" type="button" aria-label="Dimensions"><svg class="ico"><use href="#s-dim"/></svg></button>
    <button class="plain-btn" type="button" aria-label="Orthogonal"><svg class="ico"><use href="#s-angle"/></svg></button>
    <button class="plain-btn" type="button" aria-label="Tracking"><svg class="ico"><use href="#s-circ"/></svg></button>
    <button class="plain-btn" type="button" aria-label="Snap"><svg class="ico"><use href="#s-snap"/></svg></button>
    <button class="plain-btn" type="button" aria-label="Comments"><svg class="ico"><use href="#s-chat"/></svg></button>
    <button class="plain-btn" type="button" aria-label="Settings"><svg class="ico"><use href="#s-tools"/></svg></button>
  </div>
</nav>

<section class="ribbon d-flex">
  <div class="rgroup first d-flex flex-column">
    <div class="d-flex flex-grow-1">
      <button class="rbtn snug" type="button"><svg><use href="#i-plane"/></svg>Reference<br>plane</button>
      <button class="rbtn snug" type="button"><svg><use href="#i-bar"/></svg>Bar</button>
      <button class="rbtn snug" type="button"><svg><use href="#i-plate"/></svg>Plate</button>
      <button class="rbtn snug" type="button"><svg><use href="#i-adjust"/></svg>Adjust<br>bar</button>
      <button class="rbtn snug" type="button"><svg><use href="#i-trimsec"/></svg>Trim<br>section</button>
      <button class="rbtn snug" type="button"><svg><use href="#i-end"/></svg>End<br>plate</button>
      <button class="rbtn snug" type="button"><svg><use href="#i-lateral"/></svg>Lateral<br>plate</button>
      <button class="rbtn snug" type="button"><svg><use href="#i-trimpl"/></svg>Trim<br>plate</button>
      <button class="rbtn snug" type="button"><svg><use href="#i-modify"/></svg>Modify<br>corners</button>
      <button class="rbtn snug" type="button"><svg><use href="#i-move"/></svg>Move</button>
      <button class="rbtn snug" type="button"><svg><use href="#i-bolt"/></svg>Bolts</button>
      <button class="rbtn snug" type="button"><svg><use href="#i-weld"/></svg>Weld</button>
      <button class="rbtn" type="button"><svg><use href="#i-round"/></svg>Round<br>bar<span class="caret"></span></button>
      <button class="rbtn" type="button"><svg><use href="#i-contact"/></svg>Contact<br>relationship</button>
      <button class="rbtn" type="button"><svg><use href="#i-opening"/></svg>Opening</button>
      <button class="rbtn" type="button"><svg><use href="#i-concrete"/></svg>Concrete</button>
      <button class="rbtn" type="button"><svg><use href="#i-anchors"/></svg>Anchors</button>
      <button class="rbtn" type="button"><svg><use href="#i-stiff"/></svg>Stiffeners<span class="caret"></span></button>
      <button class="rbtn" type="button"><svg><use href="#i-timber"/></svg>Timber<span class="caret"></span></button>
    </div>
    <div class="rlabel">Operations</div>
  </div>
  <div class="rgroup d-flex flex-column">
    <div class="d-flex flex-grow-1">
      <button class="rbtn" type="button"><svg><use href="#i-model"/></svg>Modelling<br>options</button>
      <button class="rbtn" type="button"><svg><use href="#i-view"/></svg>View<br>options</button>
      <button class="rbtn" type="button"><svg><use href="#i-measure"/></svg>Measure<span class="caret"></span></button>
    </div>
    <div class="rlabel">Edit</div>
  </div>
  <div class="rgroup d-flex flex-column">
    <div class="d-flex flex-grow-1">
      <button class="rbtn" type="button"><svg><use href="#i-capture"/></svg>Capture<br>image</button>
      <button class="rbtn" type="button"><svg><use href="#i-library"/></svg>Library</button>
    </div>
    <div class="rlabel">Images</div>
  </div>
  <div class="rgroup d-flex flex-column">
    <div class="d-flex flex-grow-1">
      <button class="rbtn" type="button"><svg><use href="#i-import"/></svg>Import</button>
      <button class="rbtn" type="button"><svg><use href="#i-export"/></svg>Export</button>
      <button class="rbtn" type="button"><svg><use href="#i-conn"/></svg>Connections<br>library</button>
    </div>
    <div class="rlabel">Library</div>
  </div>
</section>

<main class="work">
  <section class="side d-flex flex-column">
    <div class="side-tools d-flex align-items-center">
      <button class="plain-btn" type="button" aria-label="Edit"><svg class="ico"><use href="#s-pen"/></svg></button>
      <button class="plain-btn" type="button" aria-label="Copy"><svg class="ico"><use href="#s-copy"/></svg></button>
      <button class="plain-btn" type="button" aria-label="Delete"><svg class="ico"><use href="#s-del"/></svg></button>
      <span class="sep"></span>
      <button class="plain-btn" type="button" aria-label="Move to top"><svg class="ico"><use href="#s-top"/></svg></button>
      <button class="plain-btn" type="button" aria-label="Move up"><svg class="ico"><use href="#s-up"/></svg></button>
      <button class="plain-btn" type="button" aria-label="Move down"><svg class="ico"><use href="#s-down"/></svg></button>
      <button class="plain-btn" type="button" aria-label="Move to bottom"><svg class="ico"><use href="#s-bot"/></svg></button>
      <span class="sep"></span>
      <button class="plain-btn" type="button" aria-label="Tree"><svg class="ico"><use href="#s-tree"/></svg></button>
      <button class="plain-btn" type="button" aria-label="Find"><svg class="ico"><use href="#s-find"/></svg></button>
      <button class="plain-btn" type="button" aria-label="Purge"><svg class="ico"><use href="#s-bin"/></svg></button>
    </div>
    <div class="upper">
      <div class="tree">
        <div class="tree-head">Operations</div>
        <label class="trow"><input class="tick" type="checkbox" checked><svg class="ico" opacity=".75"><use href="#i-plate"/></svg>PLATE1</label>
        <label class="trow"><input class="tick" type="checkbox" checked><svg class="ico" opacity=".75"><use href="#i-plate"/></svg>PLATE2</label>
        <label class="trow"><input class="tick" type="checkbox" checked><svg class="ico" opacity=".75"><use href="#i-plate"/></svg>PLATE3</label>
        <label class="trow"><input class="tick" type="checkbox" checked><svg class="ico"><use href="#i-adjust"/></svg>ADJUSTMENT1 (C1)</label>
        <label class="trow"><input class="tick" type="checkbox" checked><svg class="ico"><use href="#i-adjust"/></svg>ADJUSTMENT2 (L1)</label>
        <label class="trow"><input class="tick" type="checkbox" checked><svg class="ico"><use href="#i-adjust"/></svg>ADJUSTMENT3 (L2)</label>
        <label class="trow"><input class="tick" type="checkbox" checked><svg class="ico"><use href="#i-plane"/></svg>PLANE1</label>
        <label class="trow sel"><input class="tick" type="checkbox"><svg class="ico" opacity=".75"><use href="#i-trimpl"/></svg>PLATE-CUT1 (PLATE3)</label>
        <label class="trow"><input class="tick" type="checkbox"><svg class="ico" opacity=".75"><use href="#i-trimpl"/></svg>PLATE-CUT2 (PLATE3)</label>
        <label class="trow"><input class="tick" type="checkbox"><svg class="ico" opacity=".75"><use href="#i-trimpl"/></svg>PLATE-CUT3 (PLATE3)</label>
        <label class="trow"><input class="tick" type="checkbox"><svg class="ico" opacity=".75"><use href="#i-trimpl"/></svg>PLATE-CUT4 (PLATE3)</label>
        <label class="trow"><input class="tick" type="checkbox" checked><svg class="ico"><use href="#i-weld"/></svg>WELD1</label>
        <label class="trow"><input class="tick" type="checkbox" checked><svg class="ico"><use href="#i-bolt"/></svg>BOLTS1</label>
        <label class="trow"><input class="tick" type="checkbox" checked><svg class="ico"><use href="#i-bolt"/></svg>BOLTS2</label>
        <label class="trow"><input class="tick" type="checkbox" checked><svg class="ico"><use href="#i-bolt"/></svg>BOLTS3</label>
      </div>
      <div class="grip tall flex-column"><i></i><i></i><i></i><i></i></div>
      <div class="form-col d-flex flex-column">
        <form class="box form-box fields" onsubmit="return false">
          <div class="d-flex align-items-center"><label for="plate" class="me-auto">Plate</label><select id="plate" class="combo w-plate"><option>PLATE3</option></select></div>
          <div class="d-flex align-items-center"><label for="kind" class="me-auto">Slice with</label>
            <div class="fields flex-row">
              <select id="kind" class="combo w-kind"><option>Bar</option></select>
              <select class="combo w-name" aria-label="Bar name"><option>C1</option></select>
              <select class="combo w-part" aria-label="Part"><option>Bot. fl.</option></select>
              <select class="combo w-face" aria-label="Face"><option>On the back face</option></select>
            </div></div>
          <div class="d-flex align-items-center"><label for="disp" class="me-auto">Displacement</label><input id="disp" class="num" value="0.0"><span class="unit">mm</span></div>
        </form>
        <div class="box welds-box">
          <label class="welds-head d-flex align-items-center"><input class="tick big" type="checkbox">Welds</label>
        </div>
      </div>
    </div>
    <div class="grip flat"><i></i><i></i><i></i><i></i></div>
    <div class="d-flex">
      <div class="msgs d-flex overflow-hidden">
        <div class="flex-grow-1"><table>
          <tr class="sel"><td class="n">1</td><td class="ic"><svg class="ico"><use href="#s-err"/></svg></td><td class="tx">Clash: C1 (Top flange), PLATE3</td></tr>
          <tr><td class="n">2</td><td class="ic"><svg class="ico"><use href="#s-err"/></svg></td><td class="tx">Clash: C1 (Bot. fl.), PLATE3</td></tr>
          <tr><td class="n">3</td><td class="ic"><svg class="ico"><use href="#s-err"/></svg></td><td class="tx">Clash: C1 (Web), PLATE3</td></tr>
          <tr><td class="n">4</td><td class="ic"><svg class="ico"><use href="#s-err"/></svg></td><td class="tx">Clash: PLATE1, PLATE3</td></tr>
        </table></div>
        <div class="scroller d-flex flex-column">
          <button class="plain-btn" type="button" aria-label="Scroll up"><svg width="8" height="6" viewBox="0 0 8 6"><path d="M.5 5L4 1 7.500 5" fill="none" stroke="#444" stroke-width="1.600"/></svg></button>
          <div class="thumb"></div>
          <button class="plain-btn mt-auto" type="button" aria-label="Scroll down"><svg width="8" height="6" viewBox="0 0 8 6"><path d="M.5 1L4 5 7.500 1" fill="none" stroke="#444" stroke-width="1.600"/></svg></button>
        </div>
      </div>
      <button class="plain-btn close-list align-items-start" type="button" aria-label="Close list"><svg width="8" height="8" viewBox="0 0 8 8"><path d="M.5.500L7.500 7.500M7.500.500L.5 7.500" stroke="#e0103c" stroke-width="1.300"/></svg></button>
    </div>
  </section>
  <div class="grip flex-column"><i></i><i></i><i></i><i></i></div>

  <section class="d-flex flex-column">
    <div class="view-tools d-flex align-items-center justify-content-end">
      <button class="plain-btn" type="button" aria-label="Axes"><svg class="ico"><use href="#s-axes"/></svg></button>
      <button class="plain-btn" type="button" aria-label="Rotate"><svg class="ico"><use href="#s-rotc"/></svg></button>
      <button class="plain-btn" type="button" aria-label="Rotate about axis"><svg class="ico"><use href="#s-rota"/></svg></button>
      <span class="sep"></span>
      <button class="plain-btn" type="button" aria-label="Section X"><svg class="ico"><use href="#s-sec1"/></svg></button>
      <button class="plain-btn" type="button" aria-label="Section Y"><svg class="ico"><use href="#s-sec2"/></svg></button>
      <button class="plain-btn" type="button" aria-label="Section Z"><svg class="ico"><use href="#s-sec3"/></svg></button>
      <button class="plain-btn" type="button" aria-label="Layers"><svg class="ico"><use href="#s-cube"/></svg></button>
      <button class="plain-btn" type="button" aria-label="Hide"><svg class="ico"><use href="#s-hide"/></svg></button>
      <span class="sep"></span>
      <button class="plain-btn" type="button" aria-label="3D settings"><svg class="ico"><use href="#s-3d"/></svg></button>
    </div>
    <div class="scene">
      <svg viewBox="911 188 1009 811" role="img" aria-label="3D model of the connection">
        <defs>
          <clipPath id="onPlate"><path d="M1076 232L1084 228 1571 509V884L1563 888 1076 608Z"/></clipPath>
          <linearGradient id="fil" x1="0" x2="1"><stop offset="0" stop-color="#d8b8ba"/><stop offset=".35" stop-color="#e3bfbe"/><stop offset=".75" stop-color="#e3bfbe"/><stop offset="1" stop-color="#d6b3b3"/></linearGradient>
          <linearGradient id="flg" x1="0" y1="0" x2="0" y2="1"><stop offset="0" stop-color="#644a51"/><stop offset=".35" stop-color="#6f484c"/><stop offset="1" stop-color="#754f54"/></linearGradient>
        </defs>
        <!-- Column C1, below the plate -->
        <path d="M1164 560V893L1173 898 1240 859Q1253 853 1265 861L1310 886 1400 880V560Z" fill="#d8b8ba"/>
        <path d="M1238 600H1266V862Q1253 853 1238 860Z" fill="url(#fil)"/>
        <path d="M1266 700L1336 740V803L1266 845Z" fill="#be8b8b"/>
        <path d="M1310 660V978L1319 982 1482 888V800L1397 740Z" fill="#d8b8ba"/>
        <path d="M1310 720L1381 760V928Q1378 923 1372 920L1310 886Z" fill="#be8b8b"/>
        <path d="M1310 720L1336 740V803L1310 819Z" fill="#b07172"/>
        <path d="M1164 640V893L1173 898V640M1173 898L1240 859Q1253 853 1265 861L1310 886M1310 740V978L1319 982 1482 888V843M1319 740V982" class="lo"/>
        <!-- Beam L2, right of the plate -->
        <path d="M1409 413L1607 396 1612 400 1609 404 1566 430Q1561 434 1563 442L1586 499 1583 502H1565L1500 460 1451 439Z" fill="#d8b8ba"/>
        <path d="M1409 413L1607 396 1553 429 1451 438Z" fill="#c3adaf"/>
        <path d="M1607 396L1612 400 1609 404 1566 430 1561 434 1553 429Z" fill="#e4bec0"/>
        <path d="M1440 442L1546 434 1574 507 1565 506 1490 468Z" fill="#c08c8c"/>
        <path d="M1440 442L1546 434 1490 466Z" fill="#a5696c"/>
        <path d="M1440 442L1546 434 1528 444 1450 450Z" fill="#b08285"/>
        <path d="M1546 434L1490 466 1492 471 1532 447Q1541 440 1546 450L1569 508 1573 507Z" fill="#cd8f8f"/>
        <path d="M1409 413L1607 396 1612 400 1609 404 1566 430Q1561 434 1563 442L1586 499 1583 502H1573M1451 439L1553 429 1607 396M1553 429L1580 501M1440 442L1546 434 1490 466M1546 434L1573 507M1492 471L1532 447Q1541 440 1546 450L1568 506" class="lo"/>
        <!-- Beam L1, right of the plate -->
        <path d="M1560 611L1571 617 1655 666 1708 696V700L1652 734 1643 728 1560 680Z" fill="#d8b8ba"/>
        <path d="M1560 611L1655 666V733L1643 728 1560 680Z" fill="#c48f8e"/>
        <path d="M1652 668L1656 667V718Q1656 726 1662 723L1708 696V700L1652 734Z" fill="#dfb3b3"/>
        <path d="M1656 667L1708 696 1662 723Q1656 726 1656 718Z" fill="#d8b8ba"/>
        <path d="M1560 624L1643 673V739L1587 772 1560 756Z" fill="#d8b8ba"/>
        <path d="M1560 624L1643 673V729L1571 688 1560 682Z" fill="#be8b8b"/>
        <path d="M1560 624L1640 673V711L1571 673 1560 668Z" fill="#b07172"/>
        <path d="M1560 680L1642 728 1640 739Q1630 741 1618 733L1560 699Z" fill="#e3bfbe"/>
        <path d="M1571 617L1655 666 1708 696V700L1652 734 1643 729M1571 623L1652 668V733M1656 667V718Q1656 726 1662 723L1708 696M1571 630L1643 673V739L1587 772 1571 763M1571 634L1640 675V722Q1640 735 1632 740L1587 766 1571 757M1587 766V772M1640 675L1643 673" class="lo"/>
        <!-- End plate -->
        <path d="M1076 232L1084 228 1571 509V884L1563 888 1076 608Z" fill="#5d646f" stroke="#4a525d"/>
        <g clip-path="url(#onPlate)">
          <path d="M1164 584L1260 639V720L1164 680Z" fill="#755b62"/>
          <path d="M1238 626L1260 639V720H1238Z" fill="#7d5f66"/>
          <path d="M1310 667L1397 618V800L1310 740Z" fill="#755b62"/>
          <path d="M1370 635L1397 618V661L1381 652Z" fill="#7f5355"/>
          <path d="M1260 639V715M1397 660V800M1164 584V680M1173 589V680M1310 667V750M1319 663V750" class="ln"/>
          <path d="M1381 640V800" stroke="#7d4d52" fill="none"/>
          <!-- Angle L2 in front of the plate -->
          <path d="M1273 490L1289 533 1570 509 1497 465Z" fill="#755b62"/>
          <path d="M1208 492L1264 459 1546 434 1490 466Z" fill="#5f5059"/>
          <path d="M1262 469L1515 447 1490 466 1273 486Z" fill="url(#flg)"/>
          <path d="M1208 492L1490 466 1491 471 1210 496Z" fill="#7c5053"/>
          <path d="M1208 492L1264 459 1546 434M1208 492L1490 466V471L1210 496 1208 492M1273 491L1289 533 1570 509M1490 466L1546 434M1490 470L1563 513" class="ln"/>
        </g>
        <path d="M1084 228L1571 509M1076 232L1563 513 1571 509M1563 513V888" class="ln"/>
        <!-- Base plates -->
        <path d="M1162 553L1236 511 1400 603V621L1316 670 1153 578V568L1162 563Z" fill="#5d646f"/>
        <path d="M1236 512L1162 553V563L1153 568V578L1316 670 1400 621M1162 553L1323 646 1400 603M1162 563L1323 657 1400 612M1153 568L1316 661 1323 657V646M1316 661V670" class="ln"/>
        <!-- Angle L1 in front of the plate -->
        <g clip-path="url(#onPlate)">
          <path d="M1392 532L1396 530 1643 673V739L1587 772 1340 629V624L1392 593Z" fill="#755b62"/>
          <path d="M1364 643L1397 623V661Z" fill="#824f50"/>
          <path d="M1400 598L1575 699V709L1398 608Z" fill="#7f5f66"/>
          <path d="M1396 530L1643 673M1392 532L1640 676M1392 532V593L1340 624V629L1587 772M1340 624L1587 766M1323 657L1400 612M1323 646L1400 603M1316 661L1400 621M1563 560V740" class="ln"/>
        </g>
        <path d="M1235 511L1239 505 1392 591 1387 597Z" fill="#bfb485" stroke="#857e66" stroke-width=".7"/>
        <path d="M1392 591L1400 600 1397 605 1387 597Z" fill="#bd9274"/>
        <path d="M1398 614l3-1v3h-2z" fill="#b08a60"/>
        <!-- Bolts -->
        <use href="#sideBolt" x="1313" y="482" width="28" height="28"/>
        <use href="#sideBolt" x="1362" y="478" width="28" height="28"/>
        <use href="#sideBolt" x="1411" y="474" width="28" height="28"/>
        <use href="#sideBolt" x="1419" y="579" width="28" height="28"/>
        <use href="#sideBolt" x="1459" y="602" width="28" height="28"/>
        <use href="#sideBolt" x="1500" y="625" width="28" height="28"/>
        <path d="M1257 570V583Q1264 592 1277 591T1291 582V567L1270 560Z" fill="#33383d"/>
        <path d="M1257 569L1270 560 1289 563 1292 573V584L1278 589 1262 586 1257 579Z" fill="#565b60" stroke="#23282c"/>
        <path d="M1257 569L1270 560 1289 563 1292 573 1278 579 1262 577Z" fill="#4f555c" stroke="#23282c"/>
        <path d="M1262 577V587M1278 579V589" stroke="#23282c"/>
        <path d="M1208 492L1490 466 1491 471 1210 496Z" fill="#7c5053"/>
        <path d="M1208 492L1490 466V471L1210 496Z" class="ln"/>
        <!-- Clash markers -->
        <use href="#s-err" x="1243" y="466" width="15" height="15"/>
        <use href="#s-err" x="1316" y="508" width="15" height="15"/>
        <use href="#s-err" x="1316" y="560" width="15" height="15"/>
        <use href="#s-err" x="1316" y="550" width="15" height="15"/>
        <use href="#s-err" x="1389" y="550" width="15" height="15"/>
        <use href="#s-err" x="1872" y="952" width="32" height="32"/>
        <!-- Axes -->
        <path d="M936 945V915" stroke="#00f" stroke-width="2"/><path d="M936 909L940 920H932Z" fill="#0000c8"/>
        <path d="M936 945L962 930" stroke="#0e1" stroke-width="2"/><path d="M968 927L961 935 956 929Z" fill="#0c2"/><circle cx="959" cy="932" r="2.500" fill="#063"/>
        <path d="M936 945L960 959" stroke="#b00" stroke-width="2"/><path d="M967 963L956 961 960 954Z" fill="#b00000"/>
        <text class="axis" x="936" y="905" text-anchor="middle" fill="#00f">Z</text>
        <text class="axis" x="974" y="926" text-anchor="middle" fill="#0e1">Y</text>
        <text class="axis" x="974" y="970" text-anchor="middle" fill="#f00">X</text>
      </svg>
    </div>
  </section>
</main>

<footer class="bottom"><button class="accept" type="button"><u>A</u>ccept</button></footer>
</body>
</html>
